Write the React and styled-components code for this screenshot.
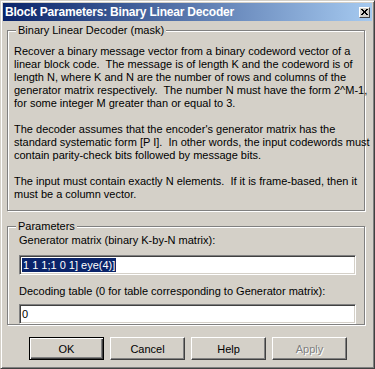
import React from "react";
import styled, { createGlobalStyle } from "styled-components";

const Global = createGlobalStyle`
  html, body {
    margin: 0;
    padding: 0;
    background: #d4d0c8;
  }
  * {
    box-sizing: border-box;
  }
`;

const Window = styled.div`
  width: 375px;
  height: 369px;
  background: #d4d0c8;
  border: 1px solid;
  border-color: #d4d0c8 #404040 #404040 #d4d0c8;
  box-shadow: inset 1px 1px #ffffff, inset -1px -1px #808080;
  padding: 2px;
  display: flex;
  flex-direction: column;
  font-family: "Liberation Sans", Arial, sans-serif;
  font-size: 11px;
  color: #000;
`;

const TitleBar = styled.div`
  height: 18px;
  display: flex;
  align-items: center;
  justify-content: space-between;
  padding: 0 2px 0 2px;
  background: linear-gradient(to right, #0a246a, #a6caf0);
`;

const Title = styled.div`
  color: #fff;
  font-weight: bold;
  font-size: 12px;
  letter-spacing: -0.2px;
  white-space: nowrap;
`;

const CloseBtn = styled.div`
  width: 11px;
  height: 11px;
  background: #d4d0c8;
  border: 1px solid;
  border-color: #ffffff #404040 #404040 #ffffff;
  display: flex;
  align-items: center;
  justify-content: center;
`;

const Body = styled.div`
  flex: 1;
  display: flex;
  flex-direction: column;
  padding: 9px 7px 0 4px;
`;

const Group = styled.div`
  position: relative;
  height: ${(p) => p.$h}px;
  border: 1px solid #808080;
  box-shadow: inset 1px 1px #ffffff, 1px 1px #ffffff;
  margin-bottom: ${(p) => p.$mb || 0}px;
  padding: ${(p) => p.$pad};
`;

const Legend = styled.span`
  position: absolute;
  top: -7px;
  left: 8px;
  padding: 0 2px;
  background: #d4d0c8;
  line-height: 13px;
  white-space: nowrap;
`;

const Description = styled.div`
  white-space: pre;
  line-height: 13px;
`;

const Label = styled.div`
  line-height: 13px;
  white-space: nowrap;
  margin-bottom: ${(p) => p.$mb}px;
`;

const Field = styled.div`
  height: 20px;
  background: #fff;
  border: 1px solid;
  border-color: #808080 #ffffff #ffffff #808080;
  box-shadow: inset 1px 1px #404040, inset -1px -1px #d4d0c8;
  padding: 2px 0 0 2px;
  margin-bottom: ${(p) => p.$mb || 0}px;
  white-space: nowrap;
  overflow: hidden;
  line-height: 14px;
`;

const Selected = styled.span`
  display: inline-block;
  background: #0a246a;
  color: #fff;
  padding: 0 1px;
  line-height: 14px;
`;

const Buttons = styled.div`
  display: flex;
  justify-content: center;
  gap: 6px;
  margin-top: 12px;
  padding-left: 4px;
`;

const Button = styled.div`
  width: 75px;
  height: 23px;
  display: flex;
  align-items: center;
  justify-content: center;
  background: #d4d0c8;
  border: 1px solid;
  border-color: ${(p) => (p.$default ? "#000" : "#ffffff #404040 #404040 #ffffff")};
  box-shadow: ${(p) =>
    p.$default
      ? "inset 1px 1px #ffffff, inset -1px -1px #404040, inset -2px -2px #808080"
      : "inset -1px -1px #808080"};
  color: ${(p) => (p.$disabled ? "#808080" : "#000")};
  text-shadow: ${(p) => (p.$disabled ? "1px 1px #ffffff" : "none")};
`;

const description = `Recover a binary message vector from a binary codeword vector of a
linear block code.  The message is of length K and the codeword is of
length N, where K and N are the number of rows and columns of the
generator matrix respectively.  The number N must have the form 2^M-1,
for some integer M greater than or equal to 3.

The decoder assumes that the encoder's generator matrix has the
standard systematic form [P I].  In other words, the input codewords must
contain parity-check bits followed by message bits.

The input must contain exactly N elements.  If it is frame-based, then it
must be a column vector.`;

export default function App() {
  return (
    <>
      <Global />
      <Window>
        <TitleBar>
          <Title>Block Parameters: Binary Linear Decoder</Title>
          <CloseBtn>
            <svg width="7" height="6" viewBox="0 0 7 6" shapeRendering="crispEdges">
              <path d="M0 0h2v1h-2zM5 0h2v1h-2zM1 1h2v1h-2zM4 1h2v1h-2zM2 2h3v2h-3zM1 4h2v1h-2zM4 4h2v1h-2zM0 5h2v1h-2zM5 5h2v1h-2z" fill="#000" />
            </svg>
          </CloseBtn>
        </TitleBar>
        <Body>
          <Group $h={181} $mb={15} $pad="14px 0 0 6px">
            <Legend>Binary Linear Decoder (mask)</Legend>
            <Description>{description}</Description>
          </Group>
          <Group $h={99} $pad="7px 8px 0 11px">
            <Legend>Parameters</Legend>
            <Label $mb={8}>Generator matrix (binary K-by-N matrix):</Label>
            <Field $mb={10}>
              <Selected>1 1 1;1 0 1] eye(4)]</Selected>
            </Field>
            <Label $mb={6}>Decoding table (0 for table corresponding to Generator matrix):</Label>
            <Field>0</Field>
          </Group>
          <Buttons>
            <Button $default>OK</Button>
            <Button>Cancel</Button>
            <Button>Help</Button>
            <Button $disabled>Apply</Button>
          </Buttons>
        </Body>
      </Window>
    </>
  );
}
